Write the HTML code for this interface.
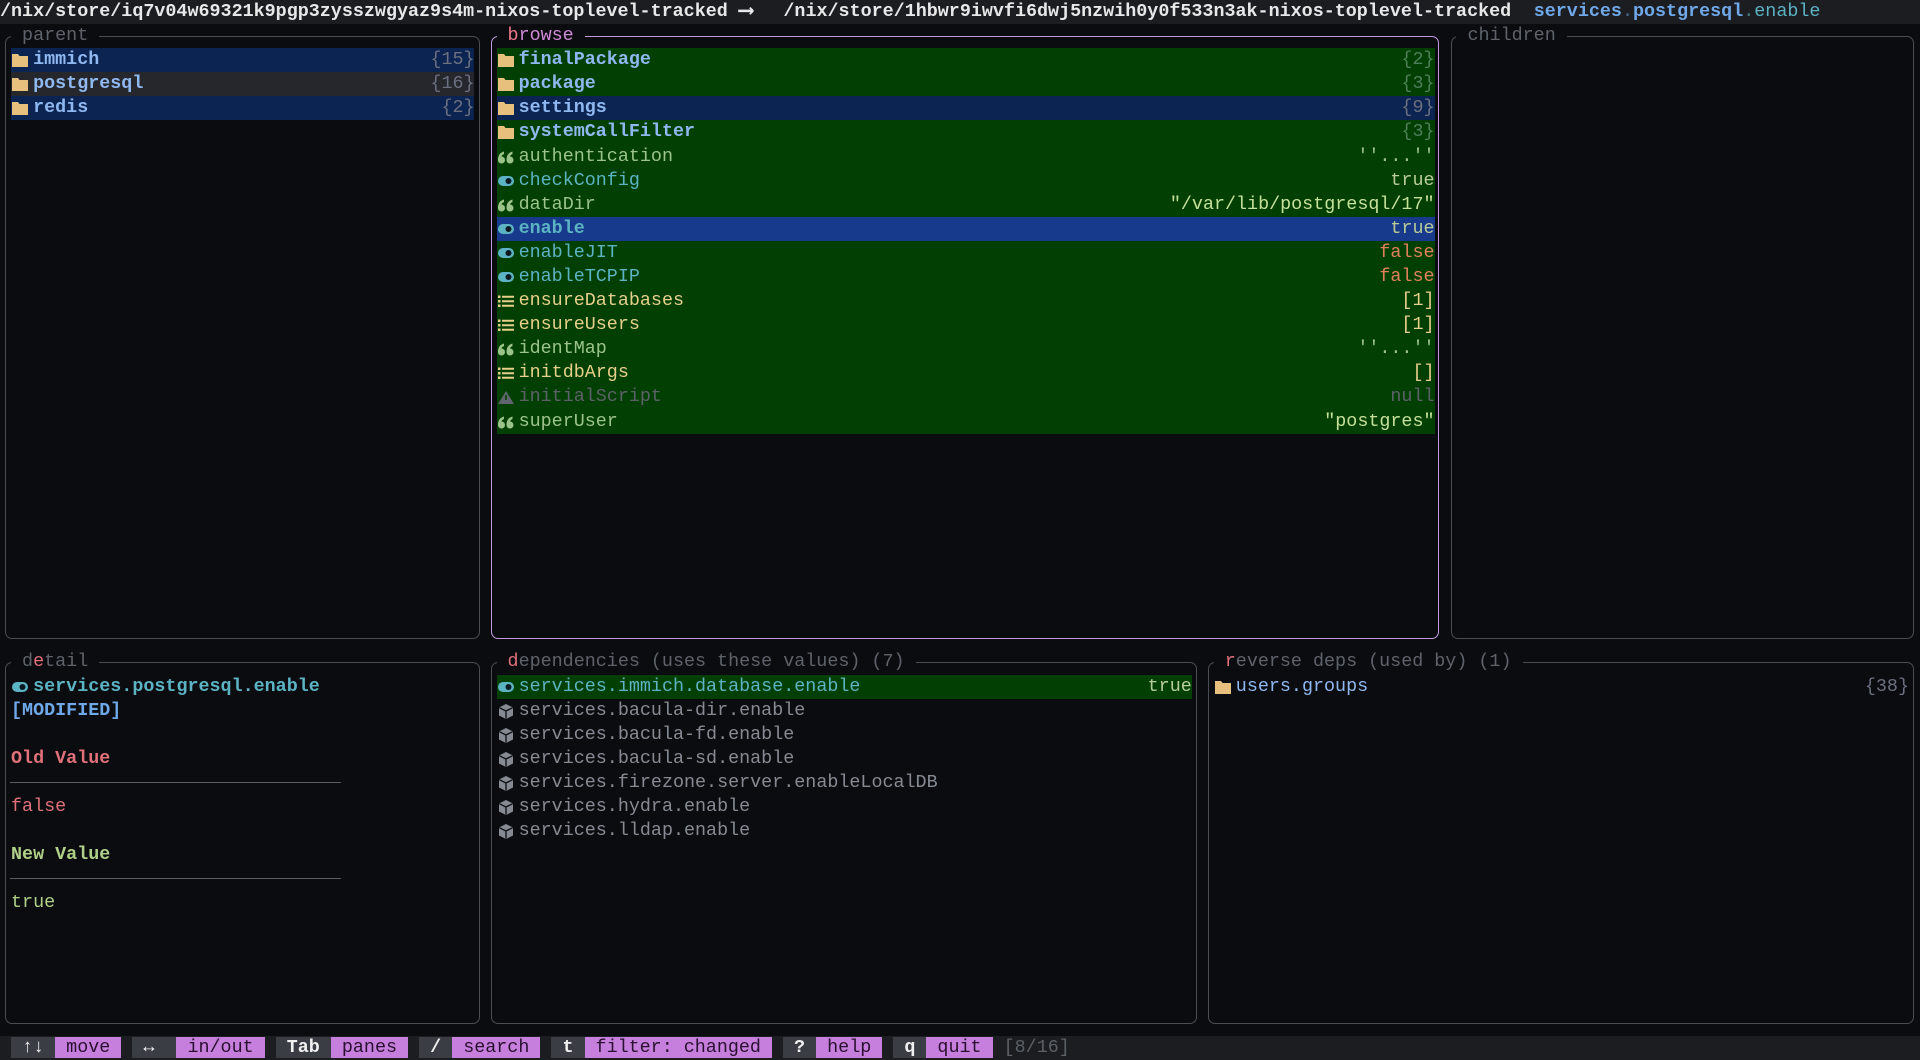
<!DOCTYPE html>
<html><head><meta charset="utf-8"><style>
html,body{margin:0;padding:0;width:1920px;height:1060px;overflow:hidden;background:#0b0c10;}
body{font-family:"Liberation Mono","DejaVu Sans Mono",monospace;font-size:18.39px;color:#c8ccd2;position:relative;}
.t{position:absolute;top:calc(var(--r)*24.09px);left:calc(var(--c)*11.034px);white-space:pre;line-height:24.09px;height:24.09px;}
.rt{left:auto;right:calc((174 - var(--e))*11.034px);}
.bar{position:absolute;top:calc(var(--r)*24.09px);left:calc(var(--c)*11.034px);width:calc(var(--w)*11.034px);height:24.09px;}
.box{position:absolute;border:1.5px solid #4a4d54;border-radius:7px;box-sizing:border-box;}
.ic{position:absolute;top:calc(var(--r)*24.09px);left:calc(var(--c)*11.034px);width:22px;height:24px;}
.ttl{background:#0b0c10;}
.b{font-weight:bold}
.fo{color:#8fb8f0;font-weight:bold}
.cnt{color:#6b7080}
.gc{color:#4f7f5a}
.q{color:#9cc48a}
.tg{color:#5bb3c3}
.ls{color:#e6cf8a}
.nl{color:#5c6168}
.tr{color:#b8cc98}
.fa{color:#e0805a}
.dep{color:#868b93}
.key{background:#3a3d44;color:#f0f0f0;font-weight:bold}
.lab{background:#c67fdc;color:#2a1030}
</style></head><body>

<!-- header -->
<div class="bar" style="--r:0;--c:0;--w:174;background:#1b1d21"></div>
<div class="t b" style="--r:0;--c:0;color:#e8e8e8">/nix/store/iq7v04w69321k9pgp3zysszwgyaz9s4m-nixos-toplevel-tracked</div>
<div class="t b" style="--r:0;--c:67;color:#e8e8e8;font-size:22px">⟶</div>
<div class="t b" style="--r:0;--c:71;color:#e8e8e8">/nix/store/1hbwr9iwvfi6dwj5nzwih0y0f533n3ak-nixos-toplevel-tracked</div>
<div class="t" style="--r:0;--c:139"><span class="b" style="color:#6fa8e8">services</span><span style="color:#4a6a8a">.</span><span class="b" style="color:#6fa8e8">postgresql</span><span style="color:#4a7a80">.</span><span style="color:#5bb3c3">enable</span></div>

<!-- boxes -->
<div class="box" style="left:5px;top:36px;width:475px;height:603px"></div>
<div class="box" style="left:491px;top:36px;width:948px;height:603px;border-color:#c49adf"></div>
<div class="box" style="left:1451px;top:36px;width:463px;height:603px"></div>
<div class="box" style="left:5px;top:662px;width:475px;height:362px"></div>
<div class="box" style="left:491px;top:662px;width:706px;height:362px"></div>
<div class="box" style="left:1208px;top:662px;width:706px;height:362px"></div>

<div class="t ttl" style="--r:1;--c:1;color:#5e636b"> parent </div>
<div class="t ttl" style="--r:1;--c:45"> <span style="color:#ec7a8c">b</span><span style="color:#d08ad8">rowse</span> </div>
<div class="t ttl" style="--r:1;--c:132;color:#5e636b"> children </div>
<div class="t ttl" style="--r:27;--c:1;color:#5e636b"> d<span style="color:#e0707a">e</span>tail </div>
<div class="t ttl" style="--r:27;--c:45;color:#5e636b"> <span style="color:#e0707a">d</span>ependencies (uses these values) (7) </div>
<div class="t ttl" style="--r:27;--c:110;color:#5e636b"> <span style="color:#e0707a">r</span>everse deps (used by) (1) </div>

<!-- parent -->
<div class="bar" style="--r:2;--c:1;--w:42;background:#0c2452"></div>
<div class="bar" style="--r:3;--c:1;--w:42;background:#25272c"></div>
<div class="bar" style="--r:4;--c:1;--w:42;background:#0c2452"></div>
<svg class="ic" style="--r:2;--c:1" viewBox="0 0 22 24"><path d="M1 6h6l1.5 2H17v11H1z" fill="#e8c07d"/></svg><div class="t fo" style="--r:2;--c:3">immich</div><div class="t rt cnt" style="--r:2;--e:43">{15}</div>
<svg class="ic" style="--r:3;--c:1" viewBox="0 0 22 24"><path d="M1 6h6l1.5 2H17v11H1z" fill="#e8c07d"/></svg><div class="t fo" style="--r:3;--c:3">postgresql</div><div class="t rt cnt" style="--r:3;--e:43">{16}</div>
<svg class="ic" style="--r:4;--c:1" viewBox="0 0 22 24"><path d="M1 6h6l1.5 2H17v11H1z" fill="#e8c07d"/></svg><div class="t fo" style="--r:4;--c:3">redis</div><div class="t rt cnt" style="--r:4;--e:43">{2}</div>

<!-- browse -->
<div style="position:absolute;left:496.5px;top:48.18px;width:938px;height:385.4px;background:#023f02"></div>
<div class="bar" style="--r:4;--c:45;--w:85;background:#0c2452;left:496.5px;width:938px"></div>
<div class="bar" style="--r:9;--c:45;--w:85;background:#183a8c;left:496.5px;width:938px"></div>

<svg class="ic" style="--r:2;--c:45" viewBox="0 0 22 24"><path d="M1 6h6l1.5 2H17v11H1z" fill="#e8c07d"/></svg><div class="t fo" style="--r:2;--c:47">finalPackage</div><div class="t rt gc" style="--r:2;--e:130">{2}</div>
<svg class="ic" style="--r:3;--c:45" viewBox="0 0 22 24"><path d="M1 6h6l1.5 2H17v11H1z" fill="#e8c07d"/></svg><div class="t fo" style="--r:3;--c:47">package</div><div class="t rt gc" style="--r:3;--e:130">{3}</div>
<svg class="ic" style="--r:4;--c:45" viewBox="0 0 22 24"><path d="M1 6h6l1.5 2H17v11H1z" fill="#e8c07d"/></svg><div class="t fo" style="--r:4;--c:47">settings</div><div class="t rt cnt" style="--r:4;--e:130">{9}</div>
<svg class="ic" style="--r:5;--c:45" viewBox="0 0 22 24"><path d="M1 6h6l1.5 2H17v11H1z" fill="#e8c07d"/></svg><div class="t fo" style="--r:5;--c:47">systemCallFilter</div><div class="t rt gc" style="--r:5;--e:130">{3}</div>
<svg class="ic" style="--r:6;--c:45" viewBox="0 0 22 24"><g fill="#9cc48a"><circle cx="4.5" cy="15" r="3.5"/><path d="M1 15Q1 8 7 6.5v2.5Q4.5 10 4.5 12z"/><circle cx="13" cy="15" r="3.5"/><path d="M9.5 15Q9.5 8 15.5 6.5v2.5Q13 10 13 12z"/></g></svg><div class="t q" style="--r:6;--c:47">authentication</div><div class="t rt q" style="--r:6;--e:130">''...''</div>
<svg class="ic" style="--r:7;--c:45" viewBox="0 0 22 24"><rect x="1" y="7" width="16" height="10" rx="5" fill="#5bb3c3"/><circle cx="11.5" cy="12" r="3" fill="#0b1a20"/></svg><div class="t tg" style="--r:7;--c:47">checkConfig</div><div class="t rt tr" style="--r:7;--e:130">true</div>
<svg class="ic" style="--r:8;--c:45" viewBox="0 0 22 24"><g fill="#9cc48a"><circle cx="4.5" cy="15" r="3.5"/><path d="M1 15Q1 8 7 6.5v2.5Q4.5 10 4.5 12z"/><circle cx="13" cy="15" r="3.5"/><path d="M9.5 15Q9.5 8 15.5 6.5v2.5Q13 10 13 12z"/></g></svg><div class="t q" style="--r:8;--c:47">dataDir</div><div class="t rt" style="--r:8;--e:130;color:#c6e09a">"/var/lib/postgresql/17"</div>
<svg class="ic" style="--r:9;--c:45" viewBox="0 0 22 24"><rect x="1" y="7" width="16" height="10" rx="5" fill="#5bb3c3"/><circle cx="11.5" cy="12" r="3" fill="#0b1a20"/></svg><div class="t tg b" style="--r:9;--c:47">enable</div><div class="t rt tr" style="--r:9;--e:130">true</div>
<svg class="ic" style="--r:10;--c:45" viewBox="0 0 22 24"><rect x="1" y="7" width="16" height="10" rx="5" fill="#5bb3c3"/><circle cx="11.5" cy="12" r="3" fill="#0b1a20"/></svg><div class="t tg" style="--r:10;--c:47">enableJIT</div><div class="t rt fa" style="--r:10;--e:130">false</div>
<svg class="ic" style="--r:11;--c:45" viewBox="0 0 22 24"><rect x="1" y="7" width="16" height="10" rx="5" fill="#5bb3c3"/><circle cx="11.5" cy="12" r="3" fill="#0b1a20"/></svg><div class="t tg" style="--r:11;--c:47">enableTCPIP</div><div class="t rt fa" style="--r:11;--e:130">false</div>
<svg class="ic" style="--r:12;--c:45" viewBox="0 0 22 24"><g fill="#e6cf8a"><rect x="1" y="6.5" width="2.5" height="2.5"/><rect x="1" y="11" width="2.5" height="2.5"/><rect x="1" y="15.5" width="2.5" height="2.5"/><rect x="5" y="6.75" width="12" height="2"/><rect x="5" y="11.25" width="12" height="2"/><rect x="5" y="15.75" width="12" height="2"/></g></svg><div class="t ls" style="--r:12;--c:47">ensureDatabases</div><div class="t rt ls" style="--r:12;--e:130">[1]</div>
<svg class="ic" style="--r:13;--c:45" viewBox="0 0 22 24"><g fill="#e6cf8a"><rect x="1" y="6.5" width="2.5" height="2.5"/><rect x="1" y="11" width="2.5" height="2.5"/><rect x="1" y="15.5" width="2.5" height="2.5"/><rect x="5" y="6.75" width="12" height="2"/><rect x="5" y="11.25" width="12" height="2"/><rect x="5" y="15.75" width="12" height="2"/></g></svg><div class="t ls" style="--r:13;--c:47">ensureUsers</div><div class="t rt ls" style="--r:13;--e:130">[1]</div>
<svg class="ic" style="--r:14;--c:45" viewBox="0 0 22 24"><g fill="#9cc48a"><circle cx="4.5" cy="15" r="3.5"/><path d="M1 15Q1 8 7 6.5v2.5Q4.5 10 4.5 12z"/><circle cx="13" cy="15" r="3.5"/><path d="M9.5 15Q9.5 8 15.5 6.5v2.5Q13 10 13 12z"/></g></svg><div class="t q" style="--r:14;--c:47">identMap</div><div class="t rt q" style="--r:14;--e:130">''...''</div>
<svg class="ic" style="--r:15;--c:45" viewBox="0 0 22 24"><g fill="#e6cf8a"><rect x="1" y="6.5" width="2.5" height="2.5"/><rect x="1" y="11" width="2.5" height="2.5"/><rect x="1" y="15.5" width="2.5" height="2.5"/><rect x="5" y="6.75" width="12" height="2"/><rect x="5" y="11.25" width="12" height="2"/><rect x="5" y="15.75" width="12" height="2"/></g></svg><div class="t ls" style="--r:15;--c:47">initdbArgs</div><div class="t rt ls" style="--r:15;--e:130">[]</div>
<svg class="ic" style="--r:16;--c:45" viewBox="0 0 22 24"><polygon points="9,6 17,19 1,19" fill="#60656d"/><rect x="8.2" y="10" width="1.6" height="5" fill="#023f02"/></svg><div class="t nl" style="--r:16;--c:47">initialScript</div><div class="t rt nl" style="--r:16;--e:130">null</div>
<svg class="ic" style="--r:17;--c:45" viewBox="0 0 22 24"><g fill="#9cc48a"><circle cx="4.5" cy="15" r="3.5"/><path d="M1 15Q1 8 7 6.5v2.5Q4.5 10 4.5 12z"/><circle cx="13" cy="15" r="3.5"/><path d="M9.5 15Q9.5 8 15.5 6.5v2.5Q13 10 13 12z"/></g></svg><div class="t q" style="--r:17;--c:47">superUser</div><div class="t rt" style="--r:17;--e:130;color:#c6e09a">"postgres"</div>

<!-- detail -->
<svg class="ic" style="--r:28;--c:1" viewBox="0 0 22 24"><rect x="1" y="7" width="16" height="10" rx="5" fill="#5bb3c3"/><circle cx="11.5" cy="12" r="3" fill="#0b1a20"/></svg><div class="t tg b" style="--r:28;--c:3">services.postgresql.enable</div>
<div class="t b" style="--r:29;--c:1;color:#6fa8e8">[MODIFIED]</div>
<div class="t b" style="--r:31;--c:1;color:#e0707a">Old Value</div>
<div style="position:absolute;left:10px;top:782px;width:331px;height:1px;background:#5a5d63"></div>
<div class="t" style="--r:33;--c:1;color:#e0707a">false</div>
<div class="t b" style="--r:35;--c:1;color:#b0d088">New Value</div>
<div style="position:absolute;left:10px;top:878px;width:331px;height:1px;background:#5a5d63"></div>
<div class="t" style="--r:37;--c:1;color:#b0d088">true</div>

<!-- deps -->
<div class="bar" style="--r:28;--c:45;--w:63;background:#023f02;left:496.5px;width:695px"></div>
<svg class="ic" style="--r:28;--c:45" viewBox="0 0 22 24"><rect x="1" y="7" width="16" height="10" rx="5" fill="#5bb3c3"/><circle cx="11.5" cy="12" r="3" fill="#0b1a20"/></svg><div class="t tg" style="--r:28;--c:47">services.immich.database.enable</div><div class="t rt tr" style="--r:28;--e:108">true</div>
<svg class="ic" style="--r:29;--c:45" viewBox="0 0 22 24"><polygon points="9,5 16,8.5 16,16.5 9,20 2,16.5 2,8.5" fill="#868b93"/><path d="M2.3 8.7L9 12L15.7 8.7M9 12V19.5" stroke="#0b0c10" stroke-width="1.3" fill="none"/></svg><div class="t dep" style="--r:29;--c:47">services.bacula-dir.enable</div>
<svg class="ic" style="--r:30;--c:45" viewBox="0 0 22 24"><polygon points="9,5 16,8.5 16,16.5 9,20 2,16.5 2,8.5" fill="#868b93"/><path d="M2.3 8.7L9 12L15.7 8.7M9 12V19.5" stroke="#0b0c10" stroke-width="1.3" fill="none"/></svg><div class="t dep" style="--r:30;--c:47">services.bacula-fd.enable</div>
<svg class="ic" style="--r:31;--c:45" viewBox="0 0 22 24"><polygon points="9,5 16,8.5 16,16.5 9,20 2,16.5 2,8.5" fill="#868b93"/><path d="M2.3 8.7L9 12L15.7 8.7M9 12V19.5" stroke="#0b0c10" stroke-width="1.3" fill="none"/></svg><div class="t dep" style="--r:31;--c:47">services.bacula-sd.enable</div>
<svg class="ic" style="--r:32;--c:45" viewBox="0 0 22 24"><polygon points="9,5 16,8.5 16,16.5 9,20 2,16.5 2,8.5" fill="#868b93"/><path d="M2.3 8.7L9 12L15.7 8.7M9 12V19.5" stroke="#0b0c10" stroke-width="1.3" fill="none"/></svg><div class="t dep" style="--r:32;--c:47">services.firezone.server.enableLocalDB</div>
<svg class="ic" style="--r:33;--c:45" viewBox="0 0 22 24"><polygon points="9,5 16,8.5 16,16.5 9,20 2,16.5 2,8.5" fill="#868b93"/><path d="M2.3 8.7L9 12L15.7 8.7M9 12V19.5" stroke="#0b0c10" stroke-width="1.3" fill="none"/></svg><div class="t dep" style="--r:33;--c:47">services.hydra.enable</div>
<svg class="ic" style="--r:34;--c:45" viewBox="0 0 22 24"><polygon points="9,5 16,8.5 16,16.5 9,20 2,16.5 2,8.5" fill="#868b93"/><path d="M2.3 8.7L9 12L15.7 8.7M9 12V19.5" stroke="#0b0c10" stroke-width="1.3" fill="none"/></svg><div class="t dep" style="--r:34;--c:47">services.lldap.enable</div>

<!-- reverse -->
<svg class="ic" style="--r:28;--c:110" viewBox="0 0 22 24"><path d="M1 6h6l1.5 2H17v11H1z" fill="#e8c07d"/></svg><div class="t" style="--r:28;--c:112;color:#8fb8f0">users.groups</div><div class="t rt cnt" style="--r:28;--e:173">{38}</div>

<!-- status -->
<div class="bar" style="--r:43;--c:0;--w:174;background:#1b1d21"></div>
<div class="t" style="--r:43;--c:1"><span class="key"> ↑↓ </span><span class="lab"> move </span> <span class="key"> ↔  </span><span class="lab"> in/out </span> <span class="key"> Tab </span><span class="lab"> panes </span> <span class="key"> / </span><span class="lab"> search </span> <span class="key"> t </span><span class="lab"> filter: changed </span> <span class="key"> ? </span><span class="lab"> help </span> <span class="key"> q </span><span class="lab"> quit </span> <span style="color:#5c6168">[8/16]</span></div>
</body></html>
